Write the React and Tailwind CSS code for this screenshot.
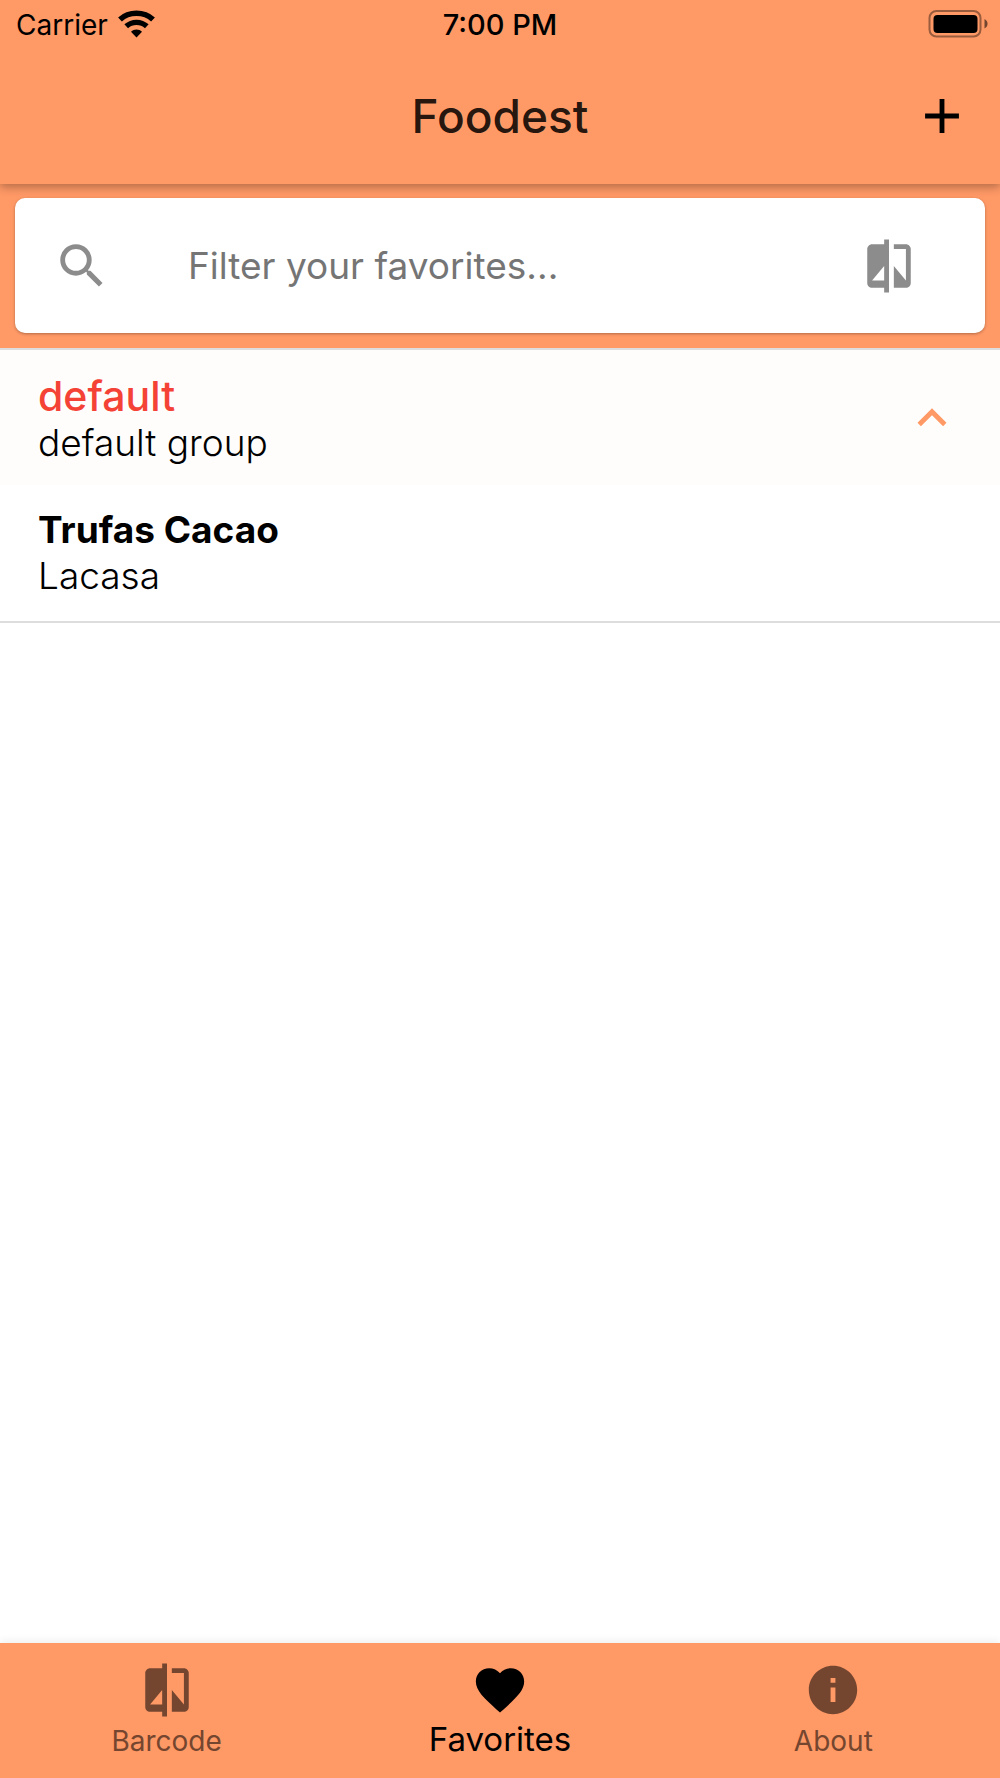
import { MdAdd, MdCompare, MdFavorite, MdInfo, MdKeyboardArrowUp, MdSearch } from "react-icons/md";

function WifiIcon() {
  return (
    <svg width="37" height="28" viewBox="0 0 37 28" fill="none" stroke="currentColor" aria-hidden="true">
      <path d="M2 9.500C11 1.200 26 1.200 35 9.500" strokeWidth="5.600" />
      <path d="M8.200 16.300C14 11 23 11 28.800 16.300" strokeWidth="5.400" />
      <path d="M13 21.800C16 18.800 21 18.800 24 21.800L18.500 27.500Z" fill="currentColor" stroke="none" />
    </svg>
  );
}

function BatteryIcon() {
  return (
    <svg width="60" height="28" viewBox="0 0 60 28" aria-hidden="true">
      <rect x="1.500" y="1" width="51" height="25.500" rx="7" fill="none" stroke="#000" strokeOpacity="0.4" strokeWidth="2" />
      <rect x="5.500" y="5" width="44" height="18" rx="4" fill="#000" />
      <path d="M56.500 9C60.500 11 60.500 16.500 56.500 18.500Z" fill="#000" fillOpacity="0.55" />
    </svg>
  );
}

function StatusBar() {
  return (
    <div className="grid h-12 grid-cols-3 items-center px-4 text-[29px] leading-8 text-black">
      <div className="flex items-center gap-2.5 text-[28px]">
        <span className="pt-0.5">Carrier</span>
        <WifiIcon />
      </div>
      <span className="pt-0.5 text-center font-medium">7:00 PM</span>
      <div className="-mr-1 flex justify-end">
        <BatteryIcon />
      </div>
    </div>
  );
}

function Header() {
  return (
    <header className="relative z-10 bg-[#ff9966] shadow-[0_3px_9px_rgba(0,0,0,0.3)]">
      <StatusBar />
      <div className="grid h-[136px] grid-cols-[58px_1fr_58px] items-center px-[29px]">
        <h1 className="col-start-2 text-center text-[46px] leading-none font-medium text-black/87">Foodest</h1>
        <button type="button" aria-label="Add group" className="text-black">
          <MdAdd size={58} />
        </button>
      </div>
    </header>
  );
}

function SearchCard() {
  return (
    <div className="bg-[#ff9966] px-[15px] pt-3.5 pb-[15px]">
      <form className="flex h-[135px] items-center rounded-[10px] bg-white pr-[67px] pl-[38px] shadow-[0_1px_3px_rgba(0,0,0,0.3)]">
        <MdSearch size={58} className="shrink-0 text-[#8c8c8c]" aria-hidden="true" />
        <input
          type="text"
          aria-label="Filter your favorites"
          placeholder="Filter your favorites..."
          className="ml-[77px] min-w-0 flex-1 bg-transparent text-[37px] text-black outline-none placeholder:text-[#757575]"
        />
        <button type="button" aria-label="Scan barcode" className="text-[#8c8c8c]">
          <MdCompare size={58} />
        </button>
      </form>
    </div>
  );
}

function FavoritesGroup() {
  return (
    <section className="border-y-2 border-[#dddddd]">
      <button
        type="button"
        aria-expanded="true"
        className="flex h-[135px] w-full items-center justify-between bg-[#fffdfb] pr-[39px] pl-[38px] text-left"
      >
        <span className="pt-0.5">
          <span className="block text-[41px] leading-12 font-medium text-[#f44336]">default</span>
          <span className="block text-[37px] leading-[46px] font-light text-black">default group</span>
        </span>
        <MdKeyboardArrowUp size={58} className="text-[#ff9966]" />
      </button>
      <ul>
        <li className="flex h-[136px] flex-col justify-center pl-[38px] text-[37px] leading-[46px] text-black">
          <span className="font-bold">Trufas Cacao</span>
          <span className="font-light">Lacasa</span>
        </li>
      </ul>
    </section>
  );
}

function BottomNav() {
  return (
    <nav className="grid h-[135px] grid-cols-3 bg-[#ff9966] shadow-[0_-2px_8px_rgba(0,0,0,0.07)]">
      <a href="#barcode" className="flex flex-col items-center pt-[18px] text-[#75462f]">
        <MdCompare size={58} />
        <span className="mt-1.5 text-[28px] leading-8">Barcode</span>
      </a>
      <a href="#favorites" aria-current="page" className="flex flex-col items-center pt-[18px] text-black">
        <MdFavorite size={58} />
        <span className="mt-1 text-[33px] leading-8">Favorites</span>
      </a>
      <a href="#about" className="flex flex-col items-center pt-[18px] text-[#75462f]">
        <MdInfo size={58} />
        <span className="mt-1.5 text-[28px] leading-8">About</span>
      </a>
    </nav>
  );
}

export default function App() {
  return (
    <div className="flex min-h-screen flex-col bg-white font-['Inter',sans-serif]">
      <Header />
      <main className="flex-1">
        <SearchCard />
        <FavoritesGroup />
      </main>
      <BottomNav />
    </div>
  );
}
